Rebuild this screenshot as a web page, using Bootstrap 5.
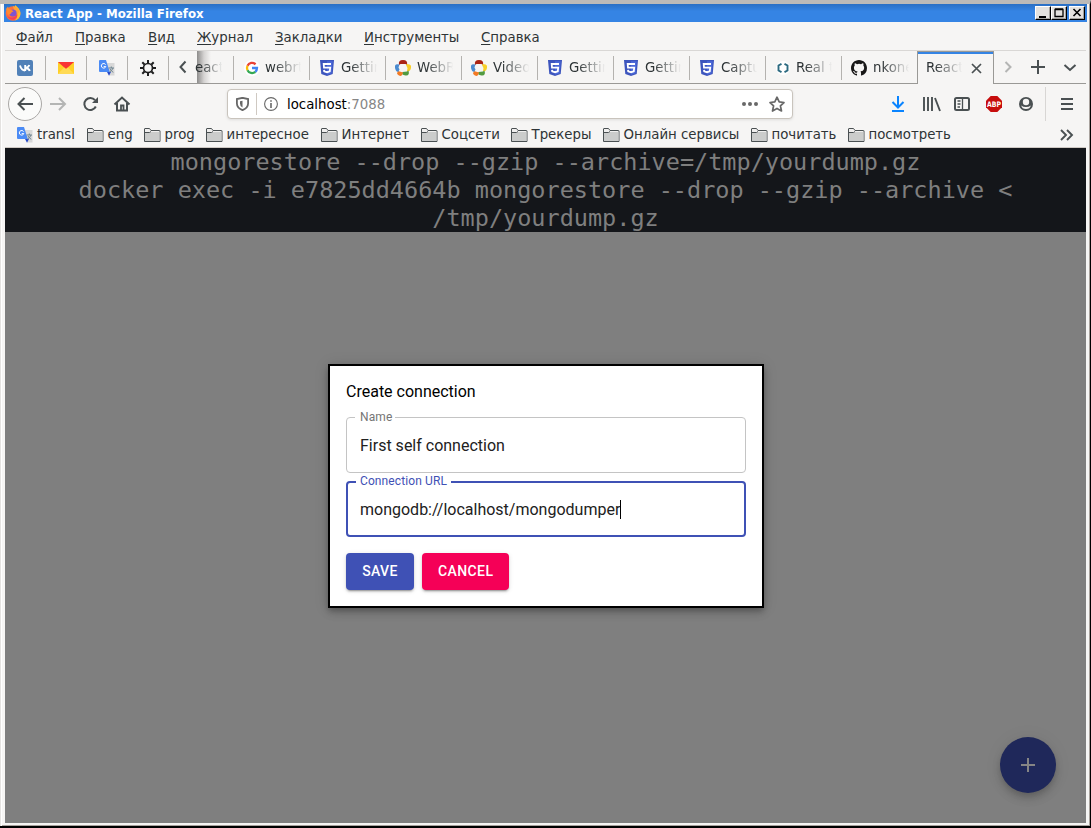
<!DOCTYPE html>
<html lang="ru">
<head>
<meta charset="utf-8">
<title>React App - Mozilla Firefox</title>
<link href="https://cdn.jsdelivr.net/npm/bootstrap@5.3.0/dist/css/bootstrap.min.css" rel="stylesheet">
<style>
body{width:1091px;height:828px;overflow:hidden;background:#f6f5f4;font:13.33px/16px "DejaVu Sans",sans-serif;color:#2e3436}
svg{display:block;flex:none}
.win{width:1091px;height:828px;border-top:4px solid #bcbab8;border-right:1px solid #000;border-bottom:2px solid #000;background:#f6f5f4;box-shadow:inset 1px 0 #e4e2e0,inset 2px 0 #fff,inset -1px -1px #a9a39e}
.inner{width:1081px;margin-left:5px}
.titlebar{height:18px;width:1083px;margin-left:4px;background:linear-gradient(#2a6fc4,#3584e4 40%);color:#fff;font-weight:bold;font-size:11.8px;padding-left:1px}
.titlebar span{padding-top:2px}
.wbtn{width:16px;height:14px;background:#e4e2df;border:1px solid;border-color:#fff #000 #000 #fff;box-shadow:inset -1px -1px #a5a29e}
.menus{height:29px;border-bottom:1px solid #d9d7d5;padding-left:11px;padding-top:8px}
.menus span{white-space:nowrap}
.menus span::first-letter{text-decoration:underline;text-underline-offset:2px}
.menus span:nth-child(1){width:59px}.menus span:nth-child(2){width:73px}.menus span:nth-child(3){width:49px}.menus span:nth-child(4){width:78px}.menus span:nth-child(5){width:89px}.menus span:nth-child(6){width:117px}
.tabs{height:33px;border-bottom:1px solid #9a9996}
.pin{width:41px;position:relative;padding-right:2px;padding-top:1px}
.sep::after{content:"";position:absolute;right:0;top:5px;width:1px;height:24px;background:#b4b2af}
.tb{width:76px;position:relative;padding-left:10px;padding-top:1px;gap:7px}
.lbl{white-space:nowrap;overflow:hidden;width:37px;-webkit-mask-image:linear-gradient(90deg,#000 25%,transparent 98%);mask-image:linear-gradient(90deg,#000 25%,transparent 98%)}
.cut{width:37px;position:relative;background:linear-gradient(90deg,#8d8c8b,#d5d3d2 7px,#f6f5f4 14px)}
.current{width:77px;height:33px;margin-left:-1px;border:1px solid #9a9996;border-bottom:0;box-shadow:inset 0 2px #3584e4;background:#f6f5f4;padding-left:8px}
.nav-row{height:40px;color:#4a5052}
.back{width:34px;height:34px;border:1px solid #aaa8a6;border-radius:50%;background:#fbfbfa;margin-left:3px}
.urlbox{width:566px;height:30px;border:1px solid #c9c4bd;border-radius:4px;background:#fff;box-shadow:0 1px 3px #0000001a;color:#000;margin-left:93px}
.marks{height:24px;border-bottom:1px solid #cfc9c4;padding-left:12px;padding-bottom:2px}
.marks>div{gap:3.5px;white-space:nowrap;height:20px}
.marks>div:nth-child(1){width:70px;gap:4px}.marks>div:nth-child(2){width:57px}.marks>div:nth-child(3){width:62px}.marks>div:nth-child(4){width:115px}.marks>div:nth-child(5){width:100px}.marks>div:nth-child(6){width:90px}.marks>div:nth-child(7){width:92px}.marks>div:nth-child(8){width:148px}.marks>div:nth-child(9){width:97px}.marks>div:nth-child(10){width:211px}
.page{height:675px;background:#7f7f7f;position:relative}
.hero{height:84px;background:#14161a;color:#7f7f7f;font:23.5px/28px "DejaVu Sans Mono",monospace;text-align:center}
.dialog{left:323px;top:216px;width:436px;height:244px;background:#fff;border:2px solid #000;padding:16px;font-family:Roboto,sans-serif;font-size:16px;color:#000;box-shadow:0 3px 5px -1px #0003,0 5px 8px #00000024,0 1px 14px #0000001f}
.dialog h2{font-size:16px;line-height:19px;margin:0 0 16px;font-weight:400}
.field{height:56px;border:1px solid #c4c4c4;border-radius:4px;padding:2px 13px 0;margin-bottom:8px;color:#212121;position:relative}
.field label{position:absolute;left:9px;top:-8px;padding:0 3px 0 4px;background:#fff;font-size:12px;line-height:14px;letter-spacing:.11px;color:#757575}
.field:first-of-type label{left:8px;padding-left:5px}
.field.on{border:2px solid #3f51b5;padding:2px 12px 0}
.field.on label{left:8px;top:-9px;padding-left:4px;padding-right:4px;color:#3f51b5}
.caret{width:1px;height:19px;margin-top:-2px;background:#000}
.mbtn{height:36.5px;border:0;border-radius:4px;padding:0 16px;color:#fff;font:500 14px/24px Roboto,sans-serif;letter-spacing:.4px;box-shadow:0 3px 1px -2px #0003,0 2px 2px #00000024,0 1px 5px #0000001f}
.b1{background:#3f51b5;width:68px}.b2{background:#f50057;width:87px}
.fab{right:30px;bottom:30px;width:56px;height:56px;border-radius:50%;background:#1f285a;box-shadow:0 3px 5px -1px #0000001a,0 6px 10px #00000024,0 1px 18px #00000012}
</style>
</head>
<body>
<svg width="0" height="0" class="position-absolute">
<defs>
<symbol id="folder" viewBox="0 0 17 16"><path d="M.5 14.5V2Q.5 1.500 1 1.500H5.500L7 3.500H15.500Q16 3.500 16 4V14.500Z" fill="#f0efee" stroke="#4a5052"/><path d="M1 5.500H6L7 5H15.500V14H1Z" fill="#cbcccb"/><path d="M1 5.500H5.500L7 4.500" fill="none" stroke="#4a5052"/></symbol>
<symbol id="html5" viewBox="0 0 16 16"><path d="M1 0H15L13.700 14 8 16 2.300 14Z" fill="#3d55bd"/><path d="M8 1.200H13.700L12.600 13.200 8 14.700Z" fill="#4c69d8"/><path d="M12 4H4.700L5 7.700H11.200L10.800 11.300 8 12.200 5.200 11.300 5 9.800" fill="none" stroke="#fff" stroke-width="1.800"/></symbol>
<symbol id="rtc" viewBox="0 0 16 16"><path d="M4 5Q3 0 8 0T12 5L10.500 4H5.500Z" fill="#ab2414"/><path d="M12 4Q17 4 16 8T12 11L12.500 8 11 5Z" fill="#f8cf2a"/><path d="M13.500 10.500Q15 16 10.500 15.500T7.500 12L12 11.500Z" fill="#529a40"/><path d="M3 11L8 12.500Q7 17 4 15.500T3 11Z" fill="#f37a24"/><path d="M4.500 4.500Q-1 3.500 0 8T3.500 11.500L4.500 9.500 3.500 7.500Z" fill="#4b8bd0"/></symbol>
<symbol id="gtr" viewBox="0 0 16 16"><path d="M7 3H15.500V15.500H10Z" fill="#d8d8d8"/><path d="M8 12H12L10 15.800Z" fill="#2749c9"/><path d="M1 0H7L10.800 12H1Q0 12 0 11V1Q0 0 1 0Z" fill="#4b8bf5"/><path d="M6.600 4.600A2.300 2.300 0 1 0 6.800 6.600H4.700" fill="none" stroke="#fff"/><path d="M9.500 8H15M12.300 6.500V8M14 8Q13 11 10.500 12M11 9Q12.500 11.500 14.300 12.300" fill="none" stroke="#6f8490"/></symbol>
</defs></svg>
<div class="win"><div class="titlebar d-flex align-items-center">
<svg width="16" height="16" viewBox="0 0 16 16"><circle cx="8" cy="8.500" r="7.300" fill="#ff7139"/><path d="M10 0Q15.500 4 15.500 9 15 14 10 15.500 15 10 10 5Z" fill="#ffbd2e"/><path d="M8 1Q13 2 14.500 7L12 9 9 5Z" fill="#ffa436"/><circle cx="8" cy="8" r="3.600" fill="#8053d0"/><path d="M1 4L3 1.500 4 4Q7 4 8.500 6.500 6 7 6 8.500L3 10Z" fill="#ff8a30"/><path d="M1 8Q2 12 6 12.500 10 13 12 9.500 13 12 9 14.800 3 15.500 1 8Z" fill="#f2405e"/></svg>
<span class="ms-1 me-auto text-nowrap">React App - Mozilla Firefox</span>
<div class="wbtn"><svg width="14" height="12"><path d="M3 9H10V11H3Z"/></svg></div>
<div class="wbtn"><svg width="14" height="12"><path d="M3 2.500H11V9.500H3ZM3 2H11" fill="none" stroke="#000" stroke-width="1.300"/></svg></div>
<div class="wbtn" style="margin:0 2px"><svg width="14" height="12"><path d="M3.500 2L10.500 9M10.500 2L3.500 9" stroke="#000" stroke-width="1.600"/></svg></div>
</div>
<div class="inner">
<div class="menus d-flex"><span class="d-inline-block">Файл</span><span class="d-inline-block">Правка</span><span class="d-inline-block">Вид</span><span class="d-inline-block">Журнал</span><span class="d-inline-block">Закладки</span><span class="d-inline-block">Инструменты</span><span class="d-inline-block">Справка</span></div>
<div class="tabs d-flex">
<div class="pin sep d-flex align-items-center justify-content-center"><svg width="16" height="16"><rect width="16" height="16" rx="2" fill="#5181b8"/><path d="M3 5.500Q4.500 10.500 8 10.500M8.200 5V11M8.500 8Q11.500 7.500 12.300 5M8.500 8Q12 8.500 12.800 11" fill="none" stroke="#fff" stroke-width="1.900"/></svg></div>
<div class="pin sep d-flex align-items-center justify-content-center"><svg width="16" height="16"><path d="M0 2H16V14H0Z" fill="#ffd028"/><path d="M0 2H16L8 9Z" fill="#f93434"/><path d="M0 14L6 7.500 8 9 10 7.500 16 14Z" fill="#ffda55"/></svg></div>
<div class="pin sep d-flex align-items-center justify-content-center"><svg width="16" height="16"><use href="#gtr"/></svg></div>
<div class="pin sep d-flex align-items-center justify-content-center"><svg width="16" height="16" viewBox="0 0 16 16" fill="none" stroke="#1f1f1f"><circle cx="8" cy="8" r="4.500" stroke-width="1.700"/><path d="M8 0V3M8 13V16M0 8H3M13 8H16M2.300 2.300L4.500 4.500M11.500 11.500L13.700 13.700M13.700 2.300L11.500 4.500M4.500 11.500L2.300 13.700" stroke-width="2"/></svg></div>
<div class="d-flex align-items-center justify-content-center" style="width:28px"><svg width="10" height="14"><path d="M7.500 1.500L2.500 7 7.500 12.500" fill="none" stroke="#4a5052" stroke-width="2"/></svg></div>
<div class="cut sep d-flex align-items-center"><span class="lbl" style="width:28px;margin-left:-2px;padding-top:1px">eact</span></div>
<div class="tb sep d-flex align-items-center"><svg width="16" height="16" viewBox="0 0 16 16"><circle cx="8" cy="8" r="8" fill="#fff"/><g fill="none" stroke-width="2.300"><path d="M11.500 4.300A5 5 0 0 0 3.500 5.800" stroke="#ea4335"/><path d="M3.500 5.800A5 5 0 0 0 3.500 10.200" stroke="#fbbc05"/><path d="M3.500 10.200A5 5 0 0 0 11.300 11.800" stroke="#34a853"/><path d="M11.300 11.800Q13 10.300 13 8H8" stroke="#4285f4"/></g></svg><span class="lbl" style="margin-left:-2px">webrtc</span></div>
<div class="tb sep d-flex align-items-center"><svg width="14" height="16"><use href="#html5" x="-1" width="16" height="16"/></svg><span class="lbl">Getting</span></div>
<div class="tb sep d-flex align-items-center" style="padding-left:9px"><svg width="16" height="16"><use href="#rtc"/></svg><span class="lbl" style="margin-left:-1px">WebRTC</span></div>
<div class="tb sep d-flex align-items-center" style="padding-left:9px"><svg width="16" height="16"><use href="#rtc"/></svg><span class="lbl" style="margin-left:-1px">Video</span></div>
<div class="tb sep d-flex align-items-center"><svg width="14" height="16"><use href="#html5" x="-1" width="16" height="16"/></svg><span class="lbl">Getting</span></div>
<div class="tb sep d-flex align-items-center"><svg width="14" height="16"><use href="#html5" x="-1" width="16" height="16"/></svg><span class="lbl">Getting</span></div>
<div class="tb sep d-flex align-items-center"><svg width="14" height="16"><use href="#html5" x="-1" width="16" height="16"/></svg><span class="lbl">Capture</span></div>
<div class="tb sep d-flex align-items-center"><svg width="14" height="16"><circle cx="7" cy="8" r="7" fill="#fff"/><path d="M5.500 3.800L2.500 5.500V10.500L5.500 12.200M8.500 3.800L11.500 5.500V10.500L8.500 12.200" fill="none" stroke="#2c6a80" stroke-width="1.900"/></svg><span class="lbl" style="margin-left:-1px">Real time</span></div>
<div class="tb d-flex align-items-center" style="padding-left:9px"><svg width="16" height="16" viewBox="0 0 16 16"><path fill="#181717" d="M8 0C3.580 0 0 3.580 0 8c0 3.540 2.290 6.530 5.470 7.590.4.070.550-.170.550-.380v-1.490c-2.010.370-2.530-.490-2.690-.940-.090-.230-.480-.940-.820-1.130-.280-.150-.680-.520-.010-.530.630-.010 1.080.580 1.230.820.720 1.210 1.870.870 2.330.660.070-.520.280-.870.510-1.070-1.780-.200-3.640-.890-3.640-3.950 0-.870.310-1.590.820-2.150-.080-.200-.360-1.020.080-2.120 0 0 .670-.210 2.200.820a7.500 7.500 0 0 1 4 0c1.530-1.040 2.200-.820 2.200-.820.440 1.100.160 1.920.080 2.120.510.560.820 1.270.820 2.150 0 3.070-1.870 3.750-3.650 3.950.290.250.540.730.540 1.480v2.200c0 .210.150.460.550.380A8 8 0 0 0 16 8c0-4.420-3.580-8-8-8"/></svg><span class="lbl" style="margin-left:-1px">nkonev</span></div>
<div class="current d-flex align-items-center"><span class="lbl">React App</span><svg class="ms-2" width="11" height="11"><path d="M1 1L10 10M10 1L1 10" stroke="#4a5052" stroke-width="1.700"/></svg></div>
<div class="flex-fill d-flex align-items-center"><svg width="92" height="20" fill="none" stroke="#4a5052" stroke-width="2"><path d="M11.500 5L16.500 10 11.500 15" stroke="#b4b5b4"/><path d="M37 10H51M44 3V17"/><path d="M70.500 8L76 13 81.500 8"/></svg></div>
</div>
<div class="nav-row d-flex align-items-center">
<div class="back d-flex align-items-center justify-content-center"><svg width="16" height="14"><path d="M16 7H1.500M7.500 1L1.500 7 7.500 13" fill="none" stroke="currentColor" stroke-width="2"/></svg></div>
<svg width="88" height="20" class="ms-1" fill="none" stroke="#4a5052" stroke-width="2"><path d="M4 10H19M13 4L19 10 13 16" stroke="#b4b5b4"/><path d="M49.800 12.500A6 6 0 1 1 49 6.200"/><path d="M52 3V9H46Z" fill="#4a5052" stroke="none"/><path d="M68.500 10.500L76 3.500 83.500 10.500M71 9V16.500H81V9"/><path d="M75 17V11.500H77.500V17" stroke-width="1.800"/></svg>
<div class="urlbox d-flex align-items-center"><svg width="14" height="14" class="ms-2" style="margin-right:-1px" viewBox="0 0 14 14"><path d="M6 .8L11.600 2V6.500Q11.500 11 6 13.200.5 11 .4 6.500V2Z" transform="translate(.5)" fill="none" stroke="#686868" stroke-width="1.800"/><path d="M6.500 3.800V10.500Q4 9.500 4 6.500V4.300Z" fill="#686868"/></svg>
<svg width="1" height="22" style="margin-left:7px"><path d="M0 0H1V22H0Z" fill="#cfc9c2"/></svg>
<svg width="14" height="14" style="margin:0 9px 0 7px"><circle cx="7" cy="7" r="6.400" fill="none" stroke="#686868" stroke-width="1.100"/><path d="M6.200 6H7.800V11H6.200ZM6.200 3.200H7.800V4.800H6.200Z" fill="#686868"/></svg>
<span class="me-auto" style="padding-top:1px">localhost<span style="color:#868686">:7088</span></span>
<svg width="51" height="18" fill="#686868"><circle cx="3" cy="9" r="2"/><circle cx="9" cy="9" r="2"/><circle cx="15" cy="9" r="2"/><path d="M37 2.200L39.200 6.900 44 7.500 40.400 10.800 41.500 16 37 13.400 32.500 16 33.600 10.800 30 7.500 34.800 6.900Z" transform="translate(-6) translate(5)" fill="none" stroke="#686868" stroke-width="1.700" stroke-linejoin="round"/></svg></div>
<svg width="188" height="34" style="margin-left:94px" viewBox="0 0 188 34" fill="none" stroke="#4a5052" stroke-width="2"><path d="M11 9V20M5.500 15L11 20.500 16.500 15M5 24H17" stroke="#0a84ff"/><path d="M37 10V24M41 10V24M45 10V24M48 11L53 24" stroke-width="1.900"/><rect x="68" y="11" width="14" height="12" rx="1.500"/><path d="M75.500 11V23M70.500 14H73.500M70.500 17H73.500M70.500 20H73" stroke-width="1.300"/><path d="M103.700 9H110.300L115 13.700V20.300L110.300 25H103.700L99 20.300V13.700Z" fill="#c70d0d" stroke="none"/><text x="107" y="20" text-anchor="middle" font-family="DejaVu Sans" font-weight="bold" font-size="7.500" textLength="14" lengthAdjust="spacingAndGlyphs" fill="#fff" stroke="none">ABP</text><circle cx="139" cy="17" r="7" fill="#4a5052" stroke="none"/><circle cx="139" cy="15" r="3.200" fill="#f6f5f4" stroke="none"/><path d="M134.200 18.500Q136 20 139 20T143.800 18.500Q143 22 139 22T134.200 18.500Z" fill="#f6f5f4" stroke="none"/><path d="M158.500 0V34" stroke="#d8d6d4" stroke-width="1"/><path d="M174 12H186M174 17H186M174 22H186"/></svg>
</div>
<div class="marks d-flex align-items-center">
<div class="d-flex align-items-center"><svg width="16" height="16"><use href="#gtr"/></svg>transl</div>
<div class="d-flex align-items-center"><svg width="17" height="16"><use href="#folder"/></svg>eng</div>
<div class="d-flex align-items-center"><svg width="17" height="16"><use href="#folder"/></svg>prog</div>
<div class="d-flex align-items-center"><svg width="17" height="16"><use href="#folder"/></svg>интересное</div>
<div class="d-flex align-items-center"><svg width="17" height="16"><use href="#folder"/></svg>Интернет</div>
<div class="d-flex align-items-center"><svg width="17" height="16"><use href="#folder"/></svg>Соцсети</div>
<div class="d-flex align-items-center"><svg width="17" height="16"><use href="#folder"/></svg>Трекеры</div>
<div class="d-flex align-items-center"><svg width="17" height="16"><use href="#folder"/></svg>Онлайн сервисы</div>
<div class="d-flex align-items-center"><svg width="17" height="16"><use href="#folder"/></svg>почитать</div>
<div class="d-flex align-items-center"><svg width="17" height="16"><use href="#folder"/></svg>посмотреть</div>
<svg width="16" height="14"><path d="M2 2L7 7 2 12M8 2L13 7 8 12" fill="none" stroke="#4a5052" stroke-width="1.900"/></svg>
</div>
<main class="page">
<div class="hero">mongorestore --drop --gzip --archive=/tmp/yourdump.gz<br>docker exec -i e7825dd4664b mongorestore --drop --gzip --archive &lt;<br>/tmp/yourdump.gz</div>
<div class="dialog position-absolute">
<h2>Create connection</h2>
<div class="field d-flex align-items-center"><label>Name</label>First self connection</div>
<div class="field on d-flex align-items-center"><label>Connection URL</label>mongodb://localhost/mongodumper<span class="caret"></span></div>
<div class="d-flex gap-2 mt-3"><button class="mbtn b1">SAVE</button><button class="mbtn b2">CANCEL</button></div>
</div>
<div class="fab position-absolute d-flex align-items-center justify-content-center"><svg width="14" height="14"><path d="M0 7H14M7 0V14" stroke="#858585" stroke-width="2"/></svg></div>
</main>
</div></div>
<script src="https://cdn.jsdelivr.net/npm/bootstrap@5.3.0/dist/js/bootstrap.bundle.min.js"></script>
</body>
</html>
